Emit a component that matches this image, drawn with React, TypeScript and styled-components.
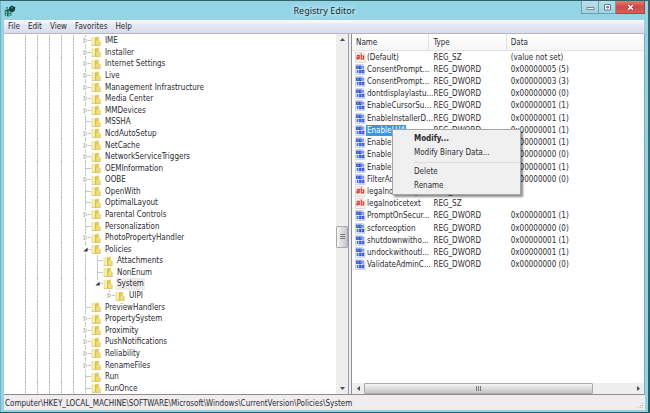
import React from "react";
import styled, { createGlobalStyle, css } from "styled-components";

const GlobalStyle = createGlobalStyle`
  *, *::before, *::after { box-sizing: border-box; }
  body {
    margin: 0;
    background: #2f6673;
    color: #2b2b30;
    font: 8px/11px "DejaVu Sans Condensed", "Open Sans", sans-serif;
  }
  button {
    margin: 0;
    padding: 0;
    border: 0;
    background: none;
    color: inherit;
    font: inherit;
  }
`;

const Desktop = styled.div`
  display: flex;
  min-height: 100vh;
  padding: 1px 2px 1px 0;
  background: linear-gradient(#37616c, #2b7680 50%, #1f5d68);
`;

const Window = styled.main`
  flex: 1;
  min-width: 0;
  display: flex;
  flex-direction: column;
  padding: 0 3px 2px;
  background: #93d5e5;
  border-left: 1px solid #78b4c3;
`;

const TitleBar = styled.header`
  display: grid;
  grid-template-columns: 1fr auto 1fr;
  align-items: start;
  height: 19px;
`;

const AppIcon = styled.svg`
  width: 12px;
  height: 12px;
  margin-top: 4px;
`;

const Title = styled.h1`
  margin: 0;
  padding: 0 8px;
  color: #1d2c33;
  font-family: "Noto Sans", "Open Sans", sans-serif;
  font-size: 9px;
  font-weight: 400;
  line-height: 19px;
  text-shadow: 0 0 5px #d4f1f7, 0 0 5px #d4f1f7;
`;

const WindowButtons = styled.div`
  display: flex;
  justify-self: end;
`;

const WindowButton = styled.button<{ $close?: boolean }>`
  display: grid;
  place-items: center;
  width: ${(p) => (p.$close ? 29 : 17)}px;
  height: 13px;
  border: solid #6d9fb0;
  border-width: 0 1px 1px 0;
  background: linear-gradient(#b9dfea, #a0d3e2);
  ${(p) =>
    p.$close &&
    css`
      border-color: #a2474a;
      background: linear-gradient(#e07c76, #cf4a45 50%, #d4605a);
    `}
  &:first-child {
    border-left-width: 1px;
    width: 18px;
  }
  svg {
    width: 9px;
    height: 9px;
  }
`;

const MenuBar = styled.nav`
  display: flex;
  align-items: center;
  gap: 8px;
  height: 14px;
  padding: 0 4px;
  border-right: 1px solid #b4c3d0;
  border-bottom: 1px solid #b6b6be;
  background: linear-gradient(#ffffff, #e6e9f5 35%, #d9dcec);
`;

const Panes = styled.div`
  flex: 1;
  display: grid;
  grid-template-columns: minmax(0, 345fr) minmax(0, 293fr);
  gap: 2px;
  background: #f2f1f2;
  border-right: 1px solid #87a5b0;
  border-bottom: 1px solid #8f8b8f;
`;

const TreePane = styled.section`
  display: flex;
  background: #fff;
  border-right: 1px solid #9a9aa3;
`;

const Tree = styled.ul`
  flex: 1;
  display: grid;
  grid-auto-rows: 1fr;
  margin: 0;
  padding: 1px 0 0 15px;
  list-style: none;
`;

const TreeRow = styled.li`
  display: flex;
  align-items: stretch;
`;

const Guide = styled.span`
  flex: none;
  width: 12px;
  background: repeating-linear-gradient(#bcbcbf 0 2px, #e0e0e1 2px 3px) 6px 0 / 1px 100% no-repeat;
`;

const Blank = styled.span`
  flex: none;
  width: 12px;
`;

const Branch = styled.span<{ $last?: boolean }>`
  flex: none;
  width: 12px;
  background:
    linear-gradient(#c6c6c8, #c6c6c8) 6px 50% / 6px 1px no-repeat,
    repeating-linear-gradient(#c4c4c6 0 2px, #e2e2e3 2px 3px) 6px 0 / 1px
      ${(p) => (p.$last ? "50%" : "100%")} no-repeat;
`;

const Expander = styled.button`
  display: grid;
  place-items: center start;
  width: 9px;
  height: 100%;
  padding-left: 4px;
  svg {
    display: block;
    width: 5px;
    height: 7px;
    background: #fff;
  }
`;

const FolderIcon = styled.svg`
  flex: none;
  align-self: center;
  width: 10px;
  height: 10px;
  margin-right: 3px;
`;

const KeyName = styled.span<{ $selected?: boolean }>`
  display: flex;
  align-items: center;
  padding: 0 1px;
  white-space: nowrap;
  background: ${(p) => (p.$selected ? "#ebebec" : "transparent")};
`;

const VScroll = styled.div`
  display: flex;
  flex-direction: column;
  width: 12px;
  background: #efeeef;
`;

const HScroll = styled.div`
  display: flex;
  height: 11px;
  background: #efeeef;
`;

const Track = styled.span<{ $share: number }>`
  flex: ${(p) => p.$share} 1 0;
`;

const ScrollArrow = styled.button`
  flex: none;
  display: grid;
  place-items: center;
  width: 12px;
  height: 11px;
  svg {
    width: 5px;
    height: 5px;
    fill: #4c4c52;
  }
`;

const Thumb = styled.div<{ $vertical?: boolean }>`
  flex: ${(p) => (p.$vertical ? "0 0 22px" : "230 1 0")};
  display: flex;
  flex-direction: ${(p) => (p.$vertical ? "column" : "row")};
  align-items: center;
  justify-content: center;
  gap: 1px;
  border: 1px solid #a9a9ac;
  border-radius: 1px;
  background: linear-gradient(${(p) => (p.$vertical ? "to right" : "to bottom")}, #f5f5f5, #dcdcdd 50%, #c6c6c9);
  i {
    width: ${(p) => (p.$vertical ? 5 : 1)}px;
    height: ${(p) => (p.$vertical ? 1 : 5)}px;
    background: #77777c;
  }
`;

const ValuePane = styled.section`
  position: relative;
  display: flex;
  flex-direction: column;
  background: #fff;
  border-left: 1px solid #8d8d9c;
`;

const TableArea = styled.div`
  flex: 1;
`;

const ValueTable = styled.table`
  width: 100%;
  height: 237px;
  table-layout: fixed;
  border-collapse: separate;
  border-spacing: 0;
`;

const HeadCell = styled.th<{ $width?: string }>`
  width: ${(p) => p.$width ?? "auto"};
  height: 17px;
  padding: 1px 4px 0;
  border: solid #e2e2e5;
  border-width: 0 1px 1px 0;
  background: linear-gradient(#ffffff, #f6f6f7);
  font-weight: 400;
  text-align: left;
  &:last-child {
    border-right: 0;
  }
`;

const Cell = styled.td`
  padding: 0 4px;
  white-space: nowrap;
`;

const NameCell = styled.td`
  padding: 0 0 0 3px;
`;

const ValueLabel = styled.div`
  display: flex;
  align-items: center;
`;

const ValueIcon = styled.svg`
  flex: none;
  width: 11px;
  height: 11px;
`;

const ValueName = styled.span<{ $selected?: boolean }>`
  padding: 0 1px;
  white-space: nowrap;
  ${(p) =>
    p.$selected &&
    css`
      background: #3b96e8;
      color: #fff;
    `}
`;

const ContextMenu = styled.div`
  position: absolute;
  top: 95px;
  left: 40px;
  display: flex;
  flex-direction: column;
  width: 129px;
  padding: 1px 1px 2px;
  border: 1px solid #a6a6a8;
  background: #f1f0f1;
  box-shadow: 2px 2px 2px rgba(0, 0, 0, 0.45);
`;

const MenuItem = styled.button<{ $default?: boolean }>`
  height: 14px;
  padding-left: 20px;
  text-align: left;
  font-weight: ${(p) => (p.$default ? 700 : 400)};
`;

const Separator = styled.hr`
  width: calc(100% - 20px);
  margin: 3px 0 1px 20px;
  border: 0;
  border-top: 1px solid #dcdcde;
`;

const StatusBar = styled.footer`
  display: flex;
  align-items: center;
  justify-content: space-between;
  height: 15px;
  padding: 2px 0 0 1px;
  background: #f0edee;
`;

const Grip = styled.svg`
  align-self: end;
  width: 8px;
  height: 8px;
  fill: #b9b5b8;
`;

type Key = {
  name: string;
  depth?: number;
  state?: "open" | "closed";
  last?: boolean;
  selected?: boolean;
};

const keys: Key[] = [
  { name: "IME", state: "closed" },
  { name: "Installer", state: "closed" },
  { name: "Internet Settings", state: "closed" },
  { name: "Live", state: "closed" },
  { name: "Management Infrastructure", state: "closed" },
  { name: "Media Center", state: "closed" },
  { name: "MMDevices", state: "closed" },
  { name: "MSSHA" },
  { name: "NcdAutoSetup", state: "closed" },
  { name: "NetCache", state: "closed" },
  { name: "NetworkServiceTriggers", state: "closed" },
  { name: "OEMInformation" },
  { name: "OOBE", state: "closed" },
  { name: "OpenWith" },
  { name: "OptimalLayout" },
  { name: "Parental Controls", state: "closed" },
  { name: "Personalization" },
  { name: "PhotoPropertyHandler", state: "closed" },
  { name: "Policies", state: "open" },
  { name: "Attachments", depth: 1 },
  { name: "NonEnum", depth: 1 },
  { name: "System", depth: 1, state: "open", last: true, selected: true },
  { name: "UIPI", depth: 2, state: "closed", last: true },
  { name: "PreviewHandlers" },
  { name: "PropertySystem", state: "closed" },
  { name: "Proximity", state: "closed" },
  { name: "PushNotifications", state: "closed" },
  { name: "Reliability", state: "closed" },
  { name: "RenameFiles", state: "closed" },
  { name: "Run" },
  { name: "RunOnce" },
];

type Value = { name: string; text?: boolean; data: string; selected?: boolean };

const values: Value[] = [
  { name: "(Default)", text: true, data: "(value not set)" },
  { name: "ConsentPrompt...", data: "0x00000005 (5)" },
  { name: "ConsentPrompt...", data: "0x00000003 (3)" },
  { name: "dontdisplaylastu...", data: "0x00000000 (0)" },
  { name: "EnableCursorSu...", data: "0x00000001 (1)" },
  { name: "EnableInstallerD...", data: "0x00000001 (1)" },
  { name: "EnableLUA", data: "0x00000001 (1)", selected: true },
  { name: "EnableSecureUI...", data: "0x00000001 (1)" },
  { name: "EnableLinkedC...", data: "0x00000000 (0)" },
  { name: "EnableVirtualiz...", data: "0x00000001 (1)" },
  { name: "FilterAdministr...", data: "0x00000000 (0)" },
  { name: "legalnoticecap...", text: true, data: "" },
  { name: "legalnoticetext", text: true, data: "" },
  { name: "PromptOnSecur...", data: "0x00000001 (1)" },
  { name: "scforceoption", data: "0x00000000 (0)" },
  { name: "shutdownwitho...", data: "0x00000001 (1)" },
  { name: "undockwithoutl...", data: "0x00000001 (1)" },
  { name: "ValidateAdminC...", data: "0x00000000 (0)" },
];

function Folder() {
  return (
    <FolderIcon viewBox="0 0 10 10" aria-hidden="true">
      <path d="M.6 1.2h4v8.2h-4z" fill="#ecd976" />
      <path d="M1.4.8h2.8v8H1.4z" fill="#f8efa8" />
      <path d="M4.4 1.2 7.8.6v4l1.8.6v4.2H4.4z" fill="#e3ca58" />
      <path d="M5.4 4.6h3.2v4.2H5.4z" fill="#f0df7e" />
      <path d="M4.5 1.8v7.4" stroke="#c3a93f" strokeWidth=".6" />
      <path d="M.8 9.5h8.8" stroke="#cdb85c" strokeWidth=".6" />
    </FolderIcon>
  );
}

function KeyToggle({ name, open }: { name: string; open: boolean }) {
  return (
    <Expander aria-label={`${open ? "Collapse" : "Expand"} ${name}`}>
      <svg viewBox="0 0 5 7">
        {open ? (
          <path d="M4.6 1.4v4.2H.4z" fill="#333338" />
        ) : (
          <path d="M1 1.2v4.6L4.2 3.5z" fill="#fff" stroke="#a6a6a9" strokeWidth=".8" />
        )}
      </svg>
    </Expander>
  );
}

function TextIcon() {
  return (
    <ValueIcon viewBox="0 0 11 11" aria-hidden="true">
      <path d="M.5.5H8l2 2v8H.5z" fill="#fdf6f4" stroke="#cfc5c5" strokeWidth=".7" />
      <g fill="none" stroke="#d8392a" strokeWidth="1.2">
        <path d="M1.8 3.4h2.4V7M4.2 5.1H2v1.7h2.2" />
        <path d="M6.2 1.4v5.4h2.4V4H6.2" />
      </g>
    </ValueIcon>
  );
}

function BinaryIcon() {
  return (
    <ValueIcon viewBox="0 0 11 11" aria-hidden="true">
      <path d="M.5.5H8l2 2v8H.5z" fill="#f0f3fd" stroke="#bfc4d3" strokeWidth=".7" />
      <g fill="none" stroke="#2a52d6" strokeWidth="1.1">
        <path d="M1.7 2h1.5v2.4H1.7zM4.6 2h1.5v2.4H4.6zM8 1.7v3" />
        <path d="M2.3 6v3M4.2 6.3h1.5v2.4H4.2zM7.2 6.3h1.5v2.4H7.2z" />
      </g>
    </ValueIcon>
  );
}

function Arrow({ d, label }: { d: string; label: string }) {
  return (
    <ScrollArrow aria-label={label}>
      <svg viewBox="0 0 5 5">
        <path d={d} />
      </svg>
    </ScrollArrow>
  );
}

function ThumbGrip() {
  return (
    <>
      <i />
      <i />
      <i />
    </>
  );
}

export default function App() {
  return (
    <>
      <GlobalStyle />
      <Desktop>
        <Window>
          <TitleBar>
            <AppIcon viewBox="0 0 12 12" aria-hidden="true">
              <path d="M.8 5.2 4 4l3.4 1.2v5.2L4 11.6.8 10.4z" fill="#1d6b62" />
              <path d="M1.6 6.2 3 6.8v1.6l-1.4-.6zM1.6 8.7l1.4.6v1.5l-1.4-.6zM4.6 6.8 6.4 6v1.7l-1.8.7zM4.6 9.3l1.8-.7v1.6l-1.8.7z" fill="#8fd6cf" />
              <path d="M5 2.8 7.6.6l3.8 1.6-.6 3.4-2.4 2L5 5.4z" fill="#123f3c" />
              <path d="m7.6 2 1.6.6-.6 1.2-1.6-.6z" fill="#49a398" />
              <path d="M2 2.6 3.4 2l.8 1.2-1.4.6z" fill="#1b5f58" />
            </AppIcon>
            <Title>Registry Editor</Title>
            <WindowButtons>
              <WindowButton aria-label="Minimize">
                <svg viewBox="0 0 9 9">
                  <path d="M1 4.5h7v2H1z" fill="#fff" stroke="#56727e" strokeWidth=".8" />
                </svg>
              </WindowButton>
              <WindowButton aria-label="Maximize">
                <svg viewBox="0 0 9 9">
                  <path d="M1.5 1.5h6v5.5h-6z" fill="#fff" stroke="#56727e" strokeWidth=".9" />
                  <path d="M3.5 3.5h2v1.5h-2z" fill="#9fc9d6" stroke="#56727e" strokeWidth=".8" />
                </svg>
              </WindowButton>
              <WindowButton $close aria-label="Close">
                <svg viewBox="0 0 9 9">
                  <path d="m2.2 2 4.6 4.6M6.8 2 2.2 6.6" stroke="#7d2f30" strokeWidth="2.6" />
                  <path d="m2.2 2 4.6 4.6M6.8 2 2.2 6.6" stroke="#fff" strokeWidth="1.6" />
                </svg>
              </WindowButton>
            </WindowButtons>
          </TitleBar>
          <MenuBar>
            {["File", "Edit", "View", "Favorites", "Help"].map((m) => (
              <button key={m}>{m}</button>
            ))}
          </MenuBar>
          <Panes>
            <TreePane>
              <Tree role="tree" aria-label="Registry keys">
                {keys.map((k) => {
                  const depth = k.depth ?? 0;
                  return (
                    <TreeRow key={k.name} role="treeitem" aria-level={depth + 1} aria-selected={!!k.selected}>
                      {[0, 1, 2, 3, 4].map((i) => (
                        <Guide key={i} />
                      ))}
                      {depth > 0 && <Guide />}
                      {depth > 1 && <Blank />}
                      <Branch $last={k.last}>
                        {k.state && <KeyToggle name={k.name} open={k.state === "open"} />}
                      </Branch>
                      <Folder />
                      <KeyName $selected={k.selected}>{k.name}</KeyName>
                    </TreeRow>
                  );
                })}
              </Tree>
              <VScroll>
                <Arrow label="Scroll up" d="M2.5 1 5 4H0z" />
                <Track $share={180} />
                <Thumb $vertical>
                  <ThumbGrip />
                </Thumb>
                <Track $share={135} />
                <Arrow label="Scroll down" d="M2.5 4 5 1H0z" />
              </VScroll>
            </TreePane>
            <ValuePane>
              <TableArea>
                <ValueTable>
                  <thead>
                    <tr>
                      <HeadCell $width="26.5%">Name</HeadCell>
                      <HeadCell $width="26.5%">Type</HeadCell>
                      <HeadCell>Data</HeadCell>
                    </tr>
                  </thead>
                  <tbody>
                    {values.map((v, i) => (
                      <tr key={i}>
                        <NameCell>
                          <ValueLabel>
                            {v.text ? <TextIcon /> : <BinaryIcon />}
                            <ValueName $selected={v.selected}>{v.name}</ValueName>
                          </ValueLabel>
                        </NameCell>
                        <Cell>{v.text ? "REG_SZ" : "REG_DWORD"}</Cell>
                        <Cell>{v.data}</Cell>
                      </tr>
                    ))}
                  </tbody>
                </ValueTable>
              </TableArea>
              <HScroll>
                <Arrow label="Scroll left" d="M1 2.5 4 0v5z" />
                <Thumb>
                  <ThumbGrip />
                </Thumb>
                <Track $share={39} />
                <Arrow label="Scroll right" d="M4 2.5 1 0v5z" />
              </HScroll>
              <ContextMenu role="menu">
                <MenuItem role="menuitem" $default>
                  Modify...
                </MenuItem>
                <MenuItem role="menuitem">Modify Binary Data...</MenuItem>
                <Separator />
                <MenuItem role="menuitem">Delete</MenuItem>
                <MenuItem role="menuitem">Rename</MenuItem>
              </ContextMenu>
            </ValuePane>
          </Panes>
          <StatusBar>
            <span>Computer\HKEY_LOCAL_MACHINE\SOFTWARE\Microsoft\Windows\CurrentVersion\Policies\System</span>
            <Grip viewBox="0 0 8 8" aria-hidden="true">
              <path d="M5 1h1v1H5zM5 3h1v1H5zM5 5h1v1H5zM3 3h1v1H3zM3 5h1v1H3zM1 5h1v1H1z" />
            </Grip>
          </StatusBar>
        </Window>
      </Desktop>
    </>
  );
}
